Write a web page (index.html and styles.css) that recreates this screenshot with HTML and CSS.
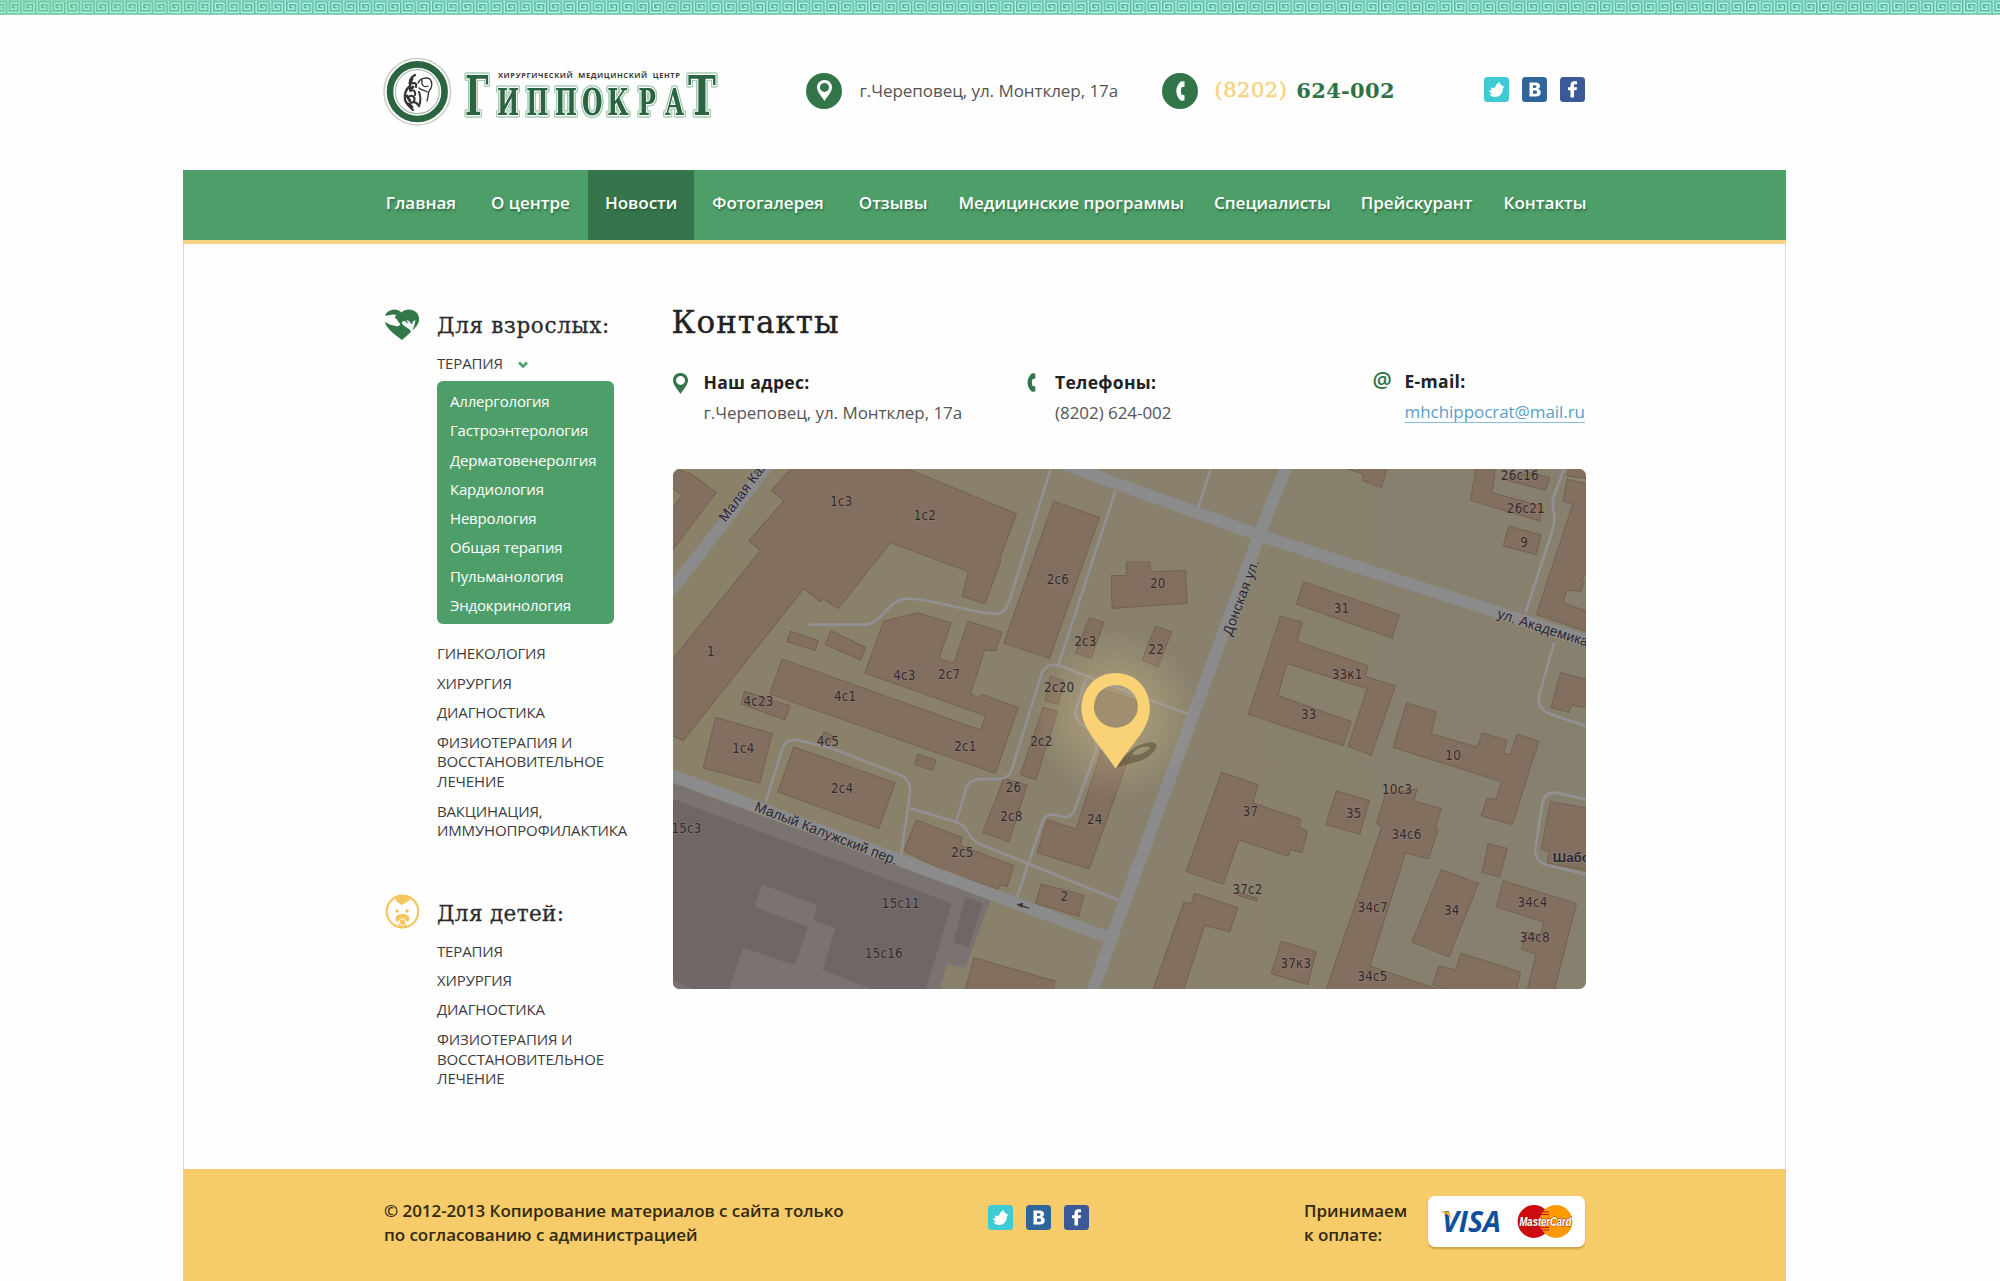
FILE: index.html
```html
<!DOCTYPE html>
<html lang="ru">
<head>
<meta charset="utf-8">
<title>Гиппократ — Контакты</title>
<link rel="stylesheet" href="styles.css">
</head>
<body>
<svg width="0" height="0" class="defs">
  <symbol id="tw" viewBox="0 0 25 25"><rect width="25" height="25" rx="3.5" fill="#3fcbd6"/><path d="M5 13.200C6.500 13.700 7.500 13.500 8 13C7 12.300 6.800 11.300 7 10.500C9 11.500 10.500 11 11.500 9.800C12 7.500 14 5.500 16 5.300L15.700 7C17 7.200 18 8 18.300 9L20.500 9.500L18.800 11.300C19.200 15 16.500 19.500 12 20C9 20.200 6.500 19 5.300 17.300C6.800 17.500 7.500 17.200 8.200 16.600C6.500 16 5.200 15 5 13.200Z" fill="#fff"/></symbol>
  <symbol id="vk" viewBox="0 0 25 25"><rect width="25" height="25" rx="3.500" fill="#2f659b"/><path fill-rule="evenodd" d="M7.500 5.500H13.500C16.500 5.500 18 6.800 18 9C18 10.500 17.200 11.500 16 12C17.800 12.500 18.800 13.700 18.800 15.500C18.800 18.200 16.900 19.500 13.700 19.500H7.500ZM11 8.200V11H12.800C14 11 14.500 10.500 14.500 9.600C14.500 8.700 14 8.200 12.800 8.200ZM11 13.500V16.800H13.200C14.500 16.800 15.100 16.200 15.100 15.200C15.100 14.100 14.400 13.500 13.200 13.500Z" fill="#fff"/></symbol>
  <symbol id="fb" viewBox="0 0 25 25"><rect width="25" height="25" rx="3.500" fill="#3b5998"/><path d="M10.500 20.500V13.200H8V10.200H10.500V8.200C10.500 5.600 12 4.300 14.300 4.300H17V7.300H15.300C14.300 7.300 14 7.700 14 8.500V10.200H17L16.600 13.200H14V20.500Z" fill="#fff"/></symbol>
  <symbol id="phone" viewBox="0 0 9 20"><path d="M8.500 .5L5 .2C1.800 3 .3 6.500 .3 10C.3 13.800 1.900 17.200 5 19.800L8.500 19.400V14.300L5.600 13.600C4.700 11.200 4.700 8.700 5.600 6.300L8.500 5.700Z"/></symbol>
  <symbol id="pin" viewBox="0 0 15 21"><path fill-rule="evenodd" d="M7.500 0C11.800 0 15 3.200 15 7.300C15 12 10.800 15.500 7.500 21C4.200 15.500 0 12 0 7.300C0 3.200 3.200 0 7.500 0ZM7.500 2.900A4.500 4.500 0 1 0 7.500 11.900A4.500 4.500 0 1 0 7.500 2.900Z"/></symbol>
</svg>

<svg class="meander" width="2000" height="15">
  <defs>
    <pattern id="key" width="14.600" height="15" x="6.700" patternUnits="userSpaceOnUse">
      <rect width="14.600" height="15" fill="#5cb3a0"/>
      <path d="M0 .8H14.600M0 14.200H14.600" stroke="#93dccb" stroke-width="1.200"/>
      <path d="M1.200 1V12.300H12.800V3.300H4.200V9.300H9.700V6.300H7" fill="none" stroke="#a9f7e4" stroke-width="1.500"/>
    </pattern>
    <linearGradient id="tint"><stop offset="0" stop-color="#8fdc9a" stop-opacity=".28"/><stop offset=".16" stop-color="#8fdc8a" stop-opacity="0"/></linearGradient>
  </defs>
  <rect width="2000" height="15" fill="url(#key)"/>
  <rect width="2000" height="15" fill="url(#tint)"/>
</svg>

<header class="header">
  <svg class="logo" width="340" height="80" viewBox="380 51 340 80">
    <g fill="none">
      <circle cx="417.300" cy="91.700" r="33.300" stroke="#c8cfc9" stroke-width="1.500"/>
      <circle cx="417.300" cy="91.700" r="27.300" stroke="#2a6440" stroke-width="6.600"/>
      <circle cx="417.300" cy="91.700" r="22" stroke="#a9bfaf" stroke-width="1.200"/>
    </g>
    <g fill="none" stroke="#333" stroke-linecap="round">
      <path d="M415 75C411 77 409 81 410 86C406 89 404 94 405 100C407 105 411 108 413 110" stroke-width="2.200"/>
      <path d="M411 84C414 82 417 83 416 87M410 91C413 89 416 91 415 95M408 97C412 94 416 97 414 101M411 103C414 101 417 103 419 106C421 101 421 97 419 92" stroke-width="2"/>
      <path d="M418 83C420 78 426 77 430 79C433 83 432 88 429 91C428 95 428 98 427 101M422 80C421 85 424 88 428 86M419 88C422 91 425 90 427 92" stroke-width="1.300"/>
      <path d="M412 79L410 83M413 87L410 89M407 96L410 101M409 104L412 107" stroke-width="2.800"/>
    </g>
    <text class="logo-sub" x="498" y="78.200" textLength="182" xml:space="preserve">ХИРУРГИЧЕСКИЙ  МЕДИЦИНСКИЙ  ЦЕНТР</text>
    <g class="logo-name">
      <text transform="translate(465 115) scale(.62 1)" font-size="55">Г</text>
      <text transform="translate(497 115) scale(.62 1)" font-size="38" x="0 47 93 137 178 228 271">ИППОКРА</text>
      <text transform="translate(688 115) scale(.68 1)" font-size="55">Т</text>
    </g>
  </svg>
  <div class="head-address">
    <span class="disc"><svg width="15" height="21"><use href="#pin"/></svg></span>
    <span>г.Череповец, ул. Монтклер, 17а</span>
  </div>
  <div class="head-phone">
    <span class="disc"><svg width="9" height="20"><use href="#phone"/></svg></span>
    <span class="code">(8202)</span><b>624-002</b>
  </div>
  <div class="social">
    <svg width="25" height="25"><use href="#tw"/></svg><svg width="25" height="25"><use href="#vk"/></svg><svg width="25" height="25"><use href="#fb"/></svg>
  </div>
</header>

<div class="page">
  <nav class="nav">
    <a>Главная</a><a>О центре</a><a class="active">Новости</a><a>Фотогалерея</a><a>Отзывы</a><a class="tight first">Медицинские программы</a><a class="tight">Специалисты</a><a class="tight">Прейскурант</a><a class="tight last">Контакты</a>
  </nav>
  <div class="body">
    <aside class="side">
      <section class="group">
        <svg class="group-icon" width="36" height="32" viewBox="0 0 36 32">
          <path d="M17.500 3.500C21 -.5 28 -.6 32 3C36 6.800 36 13 32.500 17C29 21.500 24 26 18 31C12 26.500 5 21.500 2 16C-.5 11 0 6 3.500 3C7.500 -.5 14 -.5 17.500 3.500Z" fill="#327849"/>
          <path d="M0 6C4 8 8 4 12 6C13 7.500 9.500 7.500 11 9C14 10 14 14 16 14.500C17 17 13 18 10 16.500C6 16.500 3 14 0 12.500Z" fill="#fff"/>
          <path d="M31.500 11.500L30 17.500C28 20.500 30 23 27.500 24C26.500 20 23 19 20 16.500C17.500 15 17 12.500 19.500 12C22 11.500 23 14.500 24.500 14.500L22.500 11.500C24 10.500 26 13 27.500 15C28.500 15.500 28.500 12 30.500 11.500Z" fill="#fff" opacity=".92"/>
        </svg>
        <h2>Для взрослых:</h2>
        <ul class="menu">
          <li>ТЕРАПИЯ<svg class="caret" width="10" height="8"><path d="M1 1.500L5 5.500L9 1.500" fill="none" stroke="#4c9e68" stroke-width="2.600"/></svg>
            <ul class="sub">
              <li>Аллергология</li><li>Гастроэнтерология</li><li>Дерматовенеролгия</li><li>Кардиология</li><li>Неврология</li><li>Общая терапия</li><li>Пульманология</li><li>Эндокринология</li>
            </ul>
          </li>
          <li>ГИНЕКОЛОГИЯ</li>
          <li>ХИРУРГИЯ</li>
          <li>ДИАГНОСТИКА</li>
          <li class="multi">ФИЗИОТЕРАПИЯ И<br>ВОССТАНОВИТЕЛЬНОЕ<br>ЛЕЧЕНИЕ</li>
          <li class="multi">ВАКЦИНАЦИЯ,<br>ИММУНОПРОФИЛАКТИКА</li>
        </ul>
      </section>
      <section class="group kids">
        <svg class="group-icon" width="36" height="36" viewBox="0 0 36 36">
          <circle cx="18.500" cy="17.500" r="15.800" fill="none" stroke="#f6c560" stroke-width="2.200"/>
          <path d="M11 4C15 1 22 1 26 4C26.500 8 21 7.500 18 11.500C17.500 9.500 12 9 11 4Z" fill="#f6c560"/>
          <circle cx="13" cy="17" r="1.800" fill="#f6c560"/><circle cx="23" cy="17" r="1.800" fill="#f6c560"/>
          <path d="M18.500 20C22 20 26 21.500 25.500 25C25 28 22 27.500 21.500 28C24 31 21 34.500 18.500 34.500S13 31 15.500 28C15 27.500 12 28 11.500 25C11 21.500 15 20 18.500 20Z" fill="#f6c560"/>
          <circle cx="18.500" cy="28" r="3.300" fill="none" stroke="#fff" stroke-width=".9"/>
        </svg>
        <h2>Для детей:</h2>
        <ul class="menu">
          <li>ТЕРАПИЯ</li>
          <li>ХИРУРГИЯ</li>
          <li>ДИАГНОСТИКА</li>
          <li class="multi">ФИЗИОТЕРАПИЯ И<br>ВОССТАНОВИТЕЛЬНОЕ<br>ЛЕЧЕНИЕ</li>
        </ul>
      </section>
    </aside>
    <main class="main">
      <h1>Контакты</h1>
      <div class="contacts">
        <div class="contact c-address">
          <svg width="15" height="21"><use href="#pin"/></svg>
          <div><b>Наш адрес:</b><p>г.Череповец, ул. Монтклер, 17а</p></div>
        </div>
        <div class="contact c-phone">
          <svg width="9" height="19"><use href="#phone"/></svg>
          <div><b>Телефоны:</b><p>(8202) 624-002</p></div>
        </div>
        <div class="contact c-mail">
          <span class="at">@</span>
          <div><b>E-mail:</b><p><a>mhchippocrat@mail.ru</a></p></div>
        </div>
      </div>
      <svg class="map" width="913" height="520" viewBox="0 0 913 520">
        <defs>
          <radialGradient id="glow"><stop offset=".3" stop-color="#d8c48e" stop-opacity=".36"/><stop offset="1" stop-color="#d8c48e" stop-opacity="0"/></radialGradient>
          <linearGradient id="soil"><stop offset="0" stop-color="#8b8169"/><stop offset=".5" stop-color="#89816d"/><stop offset="1" stop-color="#87806e"/></linearGradient>
        </defs>
        <rect width="913" height="520" fill="url(#soil)"/>
        <g transform="translate(-2.500 -5) scale(.33333 .33806)">
          <path fill="#7b7371" d="M0 942L960 1290L885 1490L830 1480L805 1570H0Z"/>
          <path fill="#6f6665" d="M0 988L845 1300L760 1570H0Z"/>
          <path fill="#7b7371" d="M275 1243L440 1305L428 1350L495 1372L456 1497L650 1570H170L218 1430L372 1483L413 1370L252 1310ZM0 1525L110 1570H0Z"/>
          <path fill="#6f6665" d="M885 1280L937 1298L895 1430L848 1415Z"/>
          <g class="bld">
            <path d="M0 10L60 28L137 84L0 262V140L35 92L0 68Z"/>
            <path d="M365 10L303 78L340 110L235 227L270 257L0 585V800L38 818L400 368L450 408L460 400L503 428L660 233L893 318L875 390L943 414L990 290L988 280L1038 147L700 10Z"/>
            <path d="M1150 110L1287 158L1137 575L1000 530Z"/>
            <path d="M360 495L443 522L435 552L348 525ZM482 493L586 543L570 580L463 533Z"/>
            <path d="M640 465L742 440L842 470L805 575L850 590L893 465L995 497L975 552L943 550L900 680L925 692L935 682L1043 720L975 915L298 680L335 577L930 787L945 745L583 618Z"/>
            <path d="M222 672L358 715L343 757L212 710ZM135 750L305 797L268 943L98 900ZM370 837L674 943L625 1078L322 970ZM742 858L796 876L787 907L733 888ZM460 793L487 803L480 825L450 815Z"/>
            <path d="M1257 455L1300 468L1262 575L1215 558ZM1140 628L1178 640L1165 712L1124 700ZM1118 720L1161 732L1096 935L1050 918ZM1000 930L1070 950L1015 1118L937 1090Z"/>
            <path d="M1130 1052L1217 1080L1295 840L1375 868L1256 1198L1100 1150ZM1290 665L1410 705L1375 800L1260 765Z"/>
            <path d="M738 1053L875 1105L868 1128L1030 1188L1010 1250L990 1245L982 1258L826 1205L700 1145ZM1112 1242L1240 1275L1225 1338L1095 1300ZM910 1460L1153 1530L1145 1570H880Z"/>
            <path d="M1322 330L1368 330V290H1438L1440 318L1545 315L1550 412L1325 427Z"/>
          </g>
          <g class="bld" transform="translate(1350 0)">
            <path d="M550 348L837 447L815 515L528 415ZM105 480L153 497L113 600L65 580ZM648 967L747 995L718 1095L616 1067ZM963 1200L1074 1240L985 1458L874 1413Z"/>
            <path d="M480 450L545 468L530 525L742 597L735 628L825 657L752 862L683 835L740 665L500 590L472 685L692 762L668 833L383 740Z"/>
            <path d="M858 707L948 733L932 798L1070 838L1085 795L1158 817L1150 855L1168 860L1190 800L1255 820L1175 1067L1082 1040L1100 988L1127 992L1143 940L818 838Z"/>
            <path d="M303 912L412 948L397 1003L540 1050L535 1072L560 1088L545 1150L510 1140L503 1160L355 1112L308 1243L197 1205Z"/>
            <path d="M795 975L890 962L880 995L962 1020L945 1080L952 1082L925 1168L855 1150L748 1485L1000 1570H612L783 1075L769 1062Z"/>
            <path d="M350 1265L412 1285L408 1293L350 1275ZM222 1270L352 1312L328 1383L252 1365L185 1570H92L190 1297L213 1300ZM482 1412L587 1443L562 1540L452 1508ZM1103 1123L1160 1137L1138 1222L1085 1208Z"/>
            <path d="M1148 1233L1368 1300L1298 1570H1217L1247 1450L1203 1435L1215 1385L1260 1395L1270 1355L1128 1310ZM1022 1447L1200 1503L1185 1570H1010L937 1540L955 1485L1005 1497Z"/>
            <path d="M1067 10H1125L1115 85L1265 125L1258 168L1050 108ZM1230 25L1288 40L1275 78L1150 45ZM1165 183L1262 210L1247 268L1148 242ZM670 10L727 30L725 48L783 70L800 10Z"/>
            <path d="M1340 45L1410 62V290L1383 345L1392 350L1380 378L1340 372L1327 410L1410 440V500L1248 445L1357 118L1328 110ZM1345 10H1410V45L1340 35ZM1320 617L1410 640V725L1355 712L1345 735L1292 720ZM1290 998L1410 1020V1205L1280 1180L1285 1145L1262 1140Z"/>
          </g>
          <g class="lane">
            <path d="M415 475H590C640 465 650 405 705 398C780 395 900 443 980 443C1005 440 1010 420 1020 395L1142 10M1335 80L1165 590"/>
            <path d="M1558 742L1260 632L1170 597Q1120 585 1110 630L1025 900Q1018 930 985 932H925Q893 935 885 965L858 1055"/>
            <path d="M285 1000L335 845Q345 812 380 817L480 840L690 920Q722 935 718 975L712 1020L690 1165"/>
            <path d="M718 1018L860 1060C900 1075 890 1110 930 1125L1350 1293"/>
            <path d="M1040 1280L1115 1060Q1122 1035 1150 1037L1185 1045Q1208 1043 1215 1015L1280 840L1262 785L1232 768Q1210 752 1217 725L1247 635"/>
            <path d="M1622 10L1583 130M2682 10L2647 105Q2645 130 2652 150Q2653 165 2648 190L2565 440M2650 530L2605 690Q2602 725 2640 740L2760 780M2760 995L2655 972Q2622 970 2615 1005L2594 1140Q2594 1175 2625 1185L2760 1217"/>
          </g>
          <g class="road">
            <path d="M-20 402L300 -5M-20 912L1330 1407M1855 -10L1768 205L1350 1330L1262 1570M1180 0L1350 62L1770 212L2470 435L2770 530"/>
          </g>
          <path d="M1045 1305L1075 1314" stroke="#3b3434" stroke-width="4"/><path d="M1038 1302L1058 1298L1055 1313Z" fill="#3b3434"/>
          <circle cx="1335" cy="740" r="250" fill="url(#glow)"/>
          <g class="num">
            <text x="513" y="125">1с3</text><text x="763" y="166">1с2</text><text x="1162" y="355">2с6</text><text x="121" y="567">1</text><text x="1245" y="538">2с3</text><text x="702" y="640">4с3</text><text x="836" y="635">2с7</text><text x="1166" y="673">2с20</text><text x="524" y="700">4с1</text><text x="264" y="717">4с23</text><text x="472" y="835">4с5</text><text x="219" y="855">1с4</text><text x="885" y="850">2с1</text><text x="1113" y="833">2с2</text><text x="515" y="973">2с4</text><text x="1029" y="970">26</text><text x="1023" y="1056">2с8</text><text x="1273" y="1066">24</text><text x="876" y="1164">2с5</text><text x="1182" y="1294">2</text><text x="48" y="1091">15с3</text><text x="691" y="1312">15с11</text><text x="640" y="1462">15с16</text>
            <text x="1462" y="366">20</text><text x="1457" y="561">22</text><text x="2548" y="47">26с16</text><text x="2566" y="145">26с21</text><text x="2561" y="247">9</text><text x="2013" y="440">31</text><text x="2030" y="637">33к1</text><text x="1915" y="755">33</text><text x="2348" y="877">10</text><text x="2180" y="975">10с3</text><text x="1740" y="1042">37</text><text x="2050" y="1046">35</text><text x="2208" y="1109">34с6</text><text x="1731" y="1273">37с2</text><text x="2107" y="1324">34с7</text><text x="2344" y="1333">34</text><text x="2586" y="1311">34с4</text><text x="2593" y="1413">34с8</text><text x="1876" y="1491">37к3</text><text x="2106" y="1529">34с5</text>
          </g>
          <g class="street">
            <text transform="translate(165 174) rotate(-53)" textLength="215">Малая Кал</text>
            <text transform="translate(250 1025) rotate(20.800)" textLength="455">Малый Калужский пер.</text>
            <text transform="translate(1682 510) rotate(-69)" textLength="236">Донская ул.</text>
            <text transform="translate(2478 455) rotate(17.500)" textLength="284">ул. Академика</text>
            <text x="2647" y="1176" class="halt">Шабо</text>
          </g>
          <path fill-rule="evenodd" d="M1338 898C1370 850 1400 825 1445 823C1470 828 1455 850 1430 868C1400 885 1365 888 1338 898ZM1385 858C1400 868 1435 850 1440 838C1420 830 1395 842 1385 858Z" fill="#5b5138" opacity=".6"/>
          <path fill-rule="evenodd" d="M1335 618C1395 618 1438 662 1438 722C1438 785 1385 825 1335 901C1285 825 1233 785 1233 722C1233 662 1278 618 1335 618ZM1336 654A66 63 0 1 0 1336 780A66 63 0 1 0 1336 654Z" fill="#fad276"/>
        </g>
      </svg>
    </main>
  </div>
  <footer class="footer">
    <p class="copy">© 2012-2013 Копирование материалов с сайта только<br>по согласованию с администрацией</p>
    <div class="social">
      <svg width="25" height="25"><use href="#tw"/></svg><svg width="25" height="25"><use href="#vk"/></svg><svg width="25" height="25"><use href="#fb"/></svg>
    </div>
    <p class="accept">Принимаем<br>к оплате:</p>
    <svg class="cards" width="157" height="51" viewBox="0 0 157 51">
      <text class="visa" x="14" y="35.500" textLength="59" lengthAdjust="spacingAndGlyphs">VISA</text>
      <path d="M13 15.500H19.500C21 15.700 21.500 16.500 22 18L23.500 24C21.500 19.500 17.500 17 13 16Z" fill="#eaa82a"/>
      <circle cx="106" cy="25.500" r="16.400" fill="#cc0a0f"/>
      <circle cx="128" cy="25.500" r="16.400" fill="#ff9900"/>
      <path d="M114 16H121M112.500 18.500H121M113 31.500H121M114 34H121" stroke="#cc0a0f" stroke-width="1.200"/>
      <text class="mc" x="91.500" y="29.700" textLength="52" lengthAdjust="spacingAndGlyphs">MasterCard</text>
    </svg>
  </footer>
</div>
</body>
</html>
```
FILE: styles.css
```css
* { box-sizing: border-box; }
body { margin: 0; background: #fefefe; font-family: "Open Sans", sans-serif; color: #333; height: 1281px; overflow: hidden; }
h1, h2, p, ul { margin: 0; padding: 0; }
ul { list-style: none; }
.defs { position: absolute; }
.meander { display: block; }

.header { display: flex; align-items: center; height: 155px; padding-left: 380px; }
.header > * { flex: none; }
.logo { margin-bottom: 3px; }
.logo-sub { font: bold 7.500px "Open Sans", sans-serif; fill: #3a3a3a; }
.logo-name { font-family: "DejaVu Serif", serif; font-weight: bold; fill: #2a6440; stroke: #fff; stroke-width: 2.500; paint-order: stroke; filter: drop-shadow(1px 0 0 #a3cbb1) drop-shadow(-1px 0 0 #a3cbb1) drop-shadow(0 1px 0 #a3cbb1) drop-shadow(0 -1px 0 #a3cbb1); }
.disc { display: flex; align-items: center; justify-content: center; width: 36px; height: 36px; border-radius: 50%; background: #317548; }
.disc svg { fill: #fff; }
.head-address, .head-phone { display: flex; align-items: center; height: 36px; margin-bottom: 4px; }
.head-address { margin-left: 86px; gap: 17.500px; font-size: 17px; letter-spacing: -.050px; color: #555; width: 356px; white-space: nowrap; }
.head-address span:last-child { padding-bottom: 1px; }
.head-phone { font: 21px "DejaVu Serif", serif; width: 321.500px; }
.head-phone .code { color: #f7d281; margin: 0 9px 1px 16.500px; letter-spacing: .5px; -webkit-text-stroke: .5px; }
.head-phone b { color: #2f7246; margin-bottom: 1px; letter-spacing: .3px; }
.social { display: flex; gap: 13px; height: 25px; }
.header .social { margin-bottom: 7px; }

.page { margin-left: 183px; width: 1603px; }
.nav { display: flex; height: 74px; padding-left: 185.300px; background: #4e9e69; border-bottom: 4px solid #f7d282; }
.nav a { display: flex; align-items: center; padding: 0 17.500px 5px; font-weight: 600; font-size: 17px; color: #fff; text-shadow: 1px 2px 2px rgba(30, 80, 45, .6); white-space: nowrap; }
.nav a.tight { padding: 0 15px 5px; }
.nav a.first { margin-left: -1.500px; }
.nav a.last { margin-left: 1px; }
.nav a.active { background: #36754b; margin: 0 1px; padding: 0 16.500px 5px; }
.body { display: flex; height: 925px; padding: 64px 0 0 200px; border: solid #dadada; border-width: 0 1px; }

.side { width: 288.500px; }
.group { display: grid; grid-template-columns: 53px 1fr; align-items: start; }
.group-icon { margin-top: 1px; }
.group h2 { font: 21.500px/30px "DejaVu Serif", serif; letter-spacing: .670px; -webkit-text-stroke: .3px; color: #2b2b2b; white-space: nowrap; padding-top: 3px; height: 46px; }
.menu { grid-column: 2; font-size: 15px; letter-spacing: -.150px; line-height: 19.400px; color: #3c3c3c; }
.menu > li { margin-bottom: 9.700px; white-space: nowrap; }
.menu > .multi { padding-top: 1px; }
.caret { margin-left: 15px; }
.sub { width: 177px; height: 243px; margin: 8px 0 20px; padding: 6px 13px; border-radius: 6px; background: #4e9e69; color: #fff; font-weight: 500; line-height: 29.050px; letter-spacing: -.180px; }
.kids { margin-top: 46px; }
.kids h2 { letter-spacing: .370px; }
.kids .group-icon { margin-top: -2px; }

.main { width: 914px; }
h1 { font: 31px/28px "DejaVu Serif", serif; letter-spacing: 1px; -webkit-text-stroke: .4px; color: #222; margin-left: -1px; }
.contacts { display: flex; height: 133px; padding-top: 33px; }
.contact { display: flex; font-size: 17px; letter-spacing: -.050px; color: #555; line-height: 24px; white-space: nowrap; }
.contact > svg { fill: #317548; margin-top: 4px; }
.contact div { padding-top: 1px; }
.contact b { color: #222; display: block; margin-bottom: 6.500px; font-weight: 700; font-size: 17.500px; letter-spacing: .3px; }
.c-address { gap: 16px; width: 354px; }
.c-phone { gap: 19.500px; width: 346px; }
.c-mail { gap: 12px; }
.c-mail div { padding: 0; }
.at { font-weight: 600; font-size: 21.500px; line-height: 22px; color: #317548; width: 20px; }
.c-mail a { color: #5a9dc8; text-decoration: underline #8dbbdb 1px; text-underline-offset: 4px; text-decoration-skip-ink: none; }
.map { display: block; border-radius: 7px; }
.bld { fill: #826f5f; stroke: #74624f; stroke-width: 3; }
.lane { fill: none; stroke: #939092; stroke-width: 8; }
.road { fill: none; stroke: #8b8b8c; stroke-width: 36; }
.num { font: 40px "DejaVu Sans Condensed", "DejaVu Sans", sans-serif; letter-spacing: .5px; fill: #35292e; text-anchor: middle; stroke: #9a8f84; stroke-opacity: .4; stroke-width: 5; paint-order: stroke; }
.street { font: 42px "Liberation Sans", sans-serif; fill: #2c2630; stroke: #9a9794; stroke-opacity: .5; stroke-width: 5; paint-order: stroke; }
.halt { font-weight: bold; font-size: 40px; }

.footer { display: flex; height: 112px; padding-left: 201px; background: #f6cb69; color: #32290f; font-size: 17px; line-height: 24px; font-weight: 600; white-space: nowrap; }
.copy { width: 604px; padding-top: 30px; letter-spacing: -.050px; }
.footer .social { margin-top: 36px; width: 316px; }
.accept { width: 124px; padding-top: 30px; letter-spacing: -.050px; }
.cards { background: #fff; border-radius: 7px; margin-top: 27px; box-shadow: 0 2px 2px rgba(120, 80, 0, .35); }
.visa { font: italic bold 29px "Open Sans", sans-serif; fill: #0f4f9b; }
.mc { font: italic bold 12px "Liberation Sans", sans-serif; fill: #fff; stroke: #8c2a10; stroke-width: .8; paint-order: stroke; }
```
